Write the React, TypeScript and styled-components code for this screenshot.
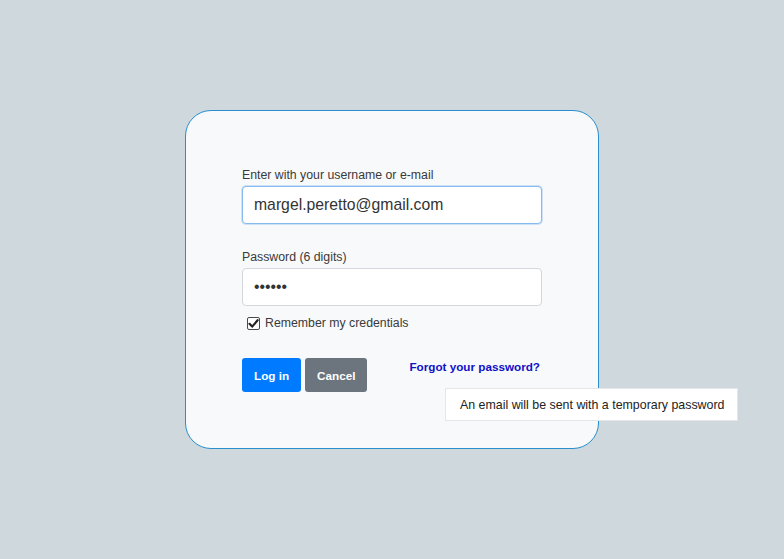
import React from "react";
import styled, { createGlobalStyle } from "styled-components";

const Global = createGlobalStyle`
  html, body { margin: 0; padding: 0; }
  body {
    background: #cfd8dc;
    font-family: "Liberation Sans", Arial, sans-serif;
    color: #333;
  }
  * { box-sizing: border-box; }
`;

const Page = styled.div`
  min-height: 559px;
  display: flex;
  align-items: center;
  justify-content: center;
`;

const Card = styled.form`
  position: relative;
  width: 414px;
  height: 339px;
  background: #f7f9fa;
  border: 1px solid #2a8fcf;
  border-radius: 26px;
  padding: 55px 56px 0 56px;
  display: flex;
  flex-direction: column;
`;

const Label = styled.label`
  display: block;
  font-size: 12.3px;
  line-height: 18px;
  color: #3a3a3a;
  margin-bottom: 2px;
`;

const Field = styled.div<{ $gap?: number }>`
  margin-bottom: ${(p) => p.$gap ?? 0}px;
`;

const Input = styled.input<{ $focused?: boolean }>`
  display: block;
  width: 300px;
  height: 38px;
  padding: 0 11px;
  font-family: "Liberation Sans", Arial, sans-serif;
  font-size: 15.75px;
  color: #333;
  background: #fff;
  border: 1px solid ${(p) => (p.$focused ? "#86b9ec" : "#d3d7db")};
  border-radius: 4px;
  box-shadow: ${(p) => (p.$focused ? "0 0 0 1px rgba(128,182,240,0.35)" : "none")};
  outline: none;
`;

const CheckRow = styled.label`
  display: flex;
  align-items: center;
  gap: 5px;
  margin-top: 9px;
  padding-left: 5px;
  font-size: 12.3px;
  line-height: 16px;
  color: #3a3a3a;
`;

const Box = styled.span`
  width: 13px;
  height: 13px;
  border: 1px solid #4a4a4a;
  border-radius: 2px;
  background: #fff;
  display: flex;
  align-items: center;
  justify-content: center;
`;

const Actions = styled.div`
  position: relative;
  display: flex;
  align-items: flex-start;
  margin-top: 27px;
`;

const Button = styled.button<{ $variant: "primary" | "secondary" }>`
  height: 34px;
  padding: 0 12px;
  margin-right: 4px;
  border: none;
  border-radius: 3px;
  font-family: "Liberation Sans", Arial, sans-serif;
  font-size: 11.7px;
  font-weight: bold;
  color: #fff;
  background: ${(p) => (p.$variant === "primary" ? "#007bff" : "#6c757d")};
`;

const Forgot = styled.a`
  margin-left: auto;
  margin-right: 2px;
  font-size: 11.7px;
  font-weight: bold;
  line-height: 18px;
  color: #1010c8;
  text-decoration: none;
`;

const Tooltip = styled.div`
  position: absolute;
  left: 203px;
  top: 30px;
  width: 293px;
  height: 33px;
  background: #fff;
  border: 1px solid #e4e7ea;
  padding-left: 14px;
  display: flex;
  align-items: center;
  font-size: 12.4px;
  color: #222;
  white-space: nowrap;
`;

export default function App() {
  return (
    <>
      <Global />
      <Page>
        <Card onSubmit={(e) => e.preventDefault()}>
          <Field $gap={24}>
            <Label>Enter with your username or e-mail</Label>
            <Input $focused defaultValue="margel.peretto@gmail.com" />
          </Field>
          <Field>
            <Label>Password (6 digits)</Label>
            <Input type="password" defaultValue="123456" />
          </Field>
          <CheckRow>
            <Box>
              <svg width="11" height="11" viewBox="0 0 11 11">
                <path d="M1.5 5.8 L4.2 8.6 L9.6 2.2" fill="none" stroke="#222" strokeWidth="2.2" strokeLinecap="round" strokeLinejoin="round" />
              </svg>
            </Box>
            Remember my credentials
          </CheckRow>
          <Actions>
            <Button type="submit" $variant="primary">Log in</Button>
            <Button type="button" $variant="secondary">Cancel</Button>
            <Forgot href="#">Forgot your password?</Forgot>
            <Tooltip>An email will be sent with a temporary password</Tooltip>
          </Actions>
        </Card>
      </Page>
    </>
  );
}
